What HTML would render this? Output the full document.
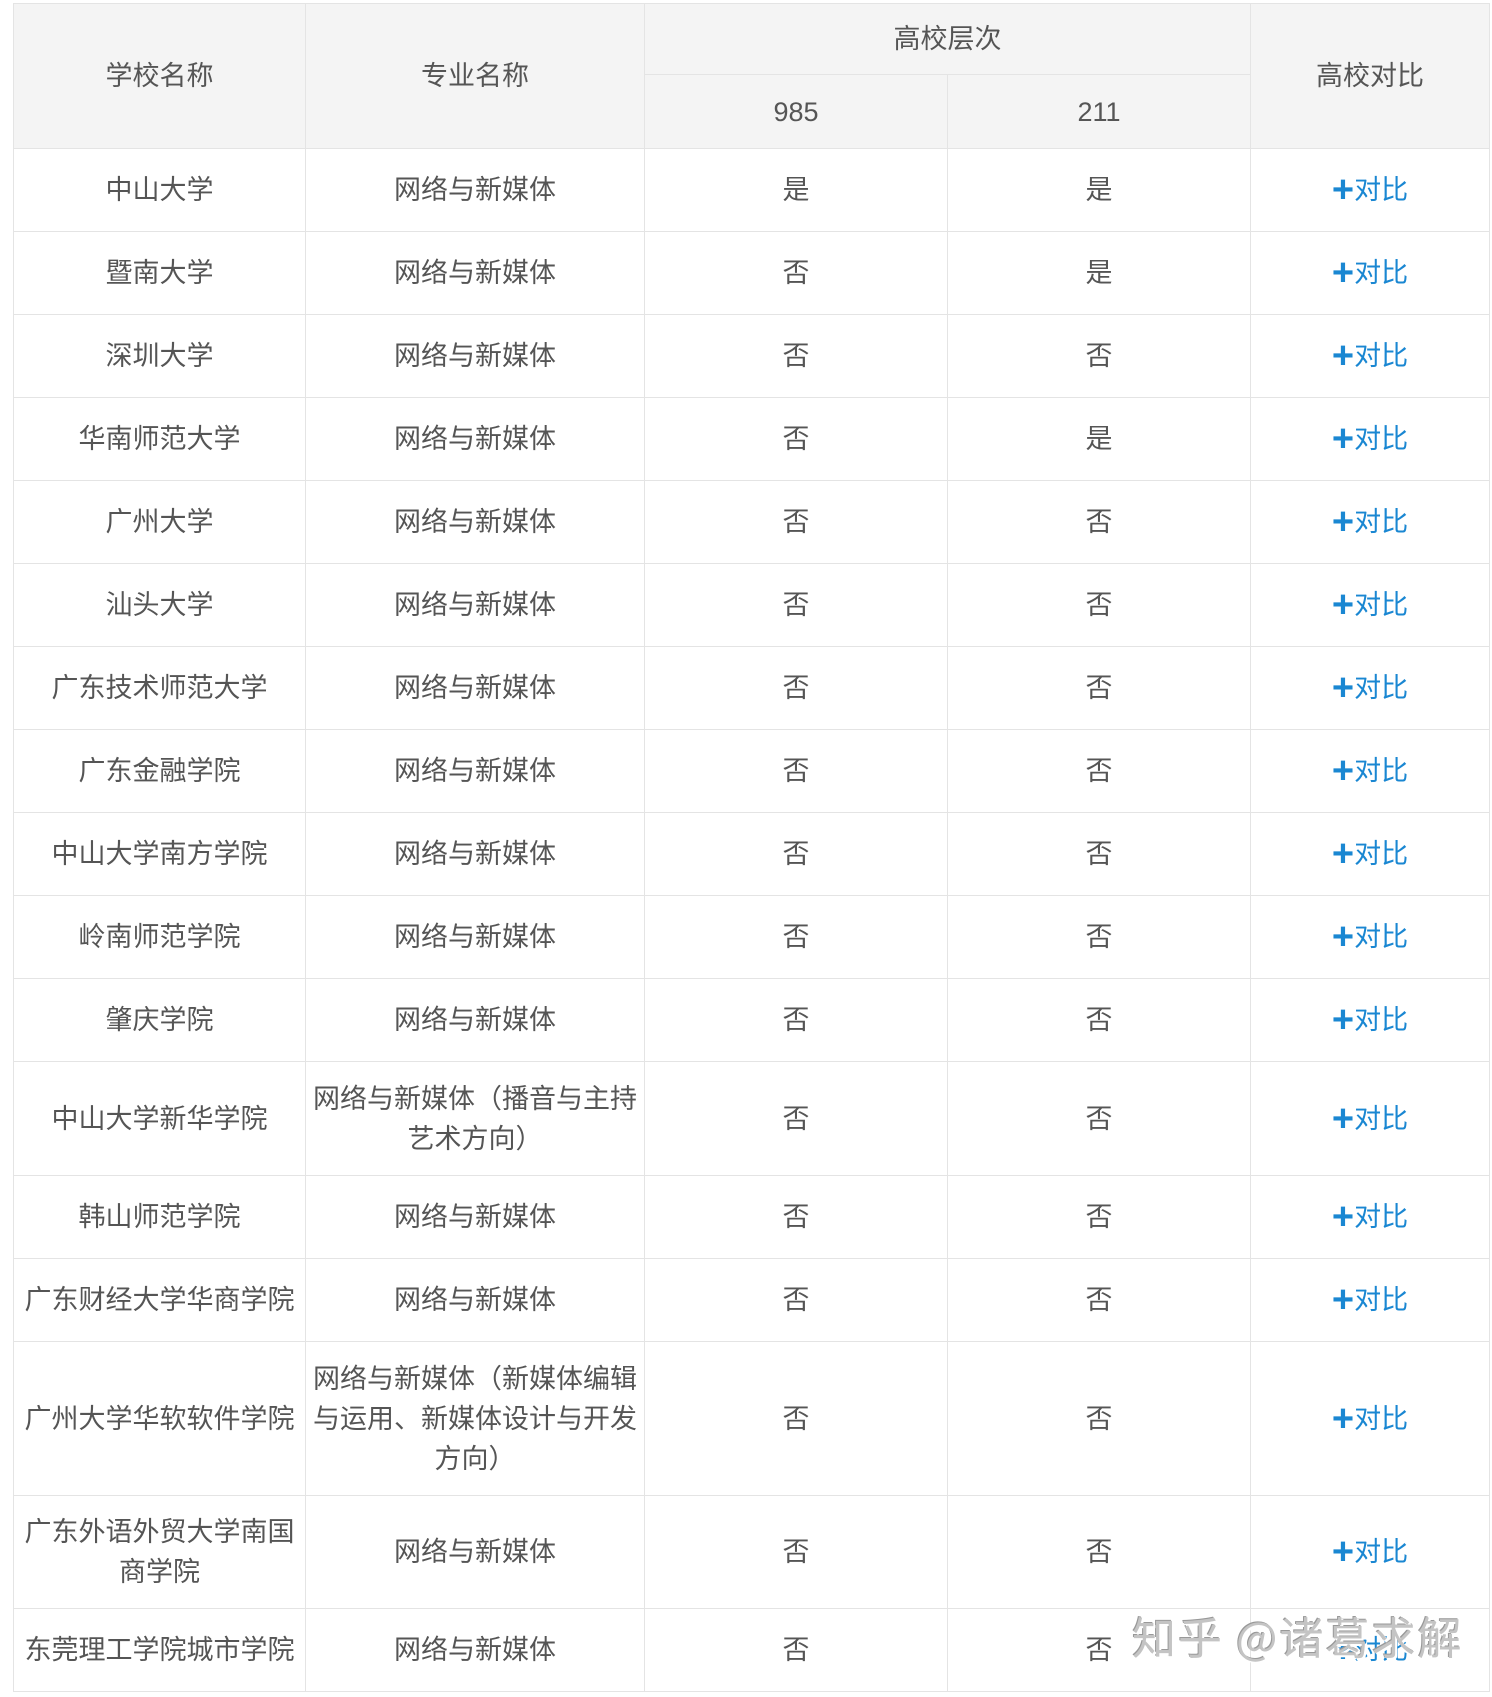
<!DOCTYPE html>
<html><head><meta charset="utf-8"><style>
body{margin:0;background:#fff;width:1492px;height:1697px;overflow:hidden;position:relative;font-family:"Liberation Sans","Noto Sans CJK SC",sans-serif;}
table{position:absolute;left:13px;top:3px;border-collapse:collapse;table-layout:fixed;width:1476px;}
td,th{border:1px solid #e4e4e4;text-align:center;vertical-align:middle;font-size:27px;color:#555;font-weight:normal;line-height:40px;padding:0 6px;}
th{background:#f4f4f4;}
.b{color:#1a87d2;}
.b b{font-size:38px;font-weight:bold;vertical-align:-3px;line-height:30px;}
tr.r{height:83px;}
.wm{position:absolute;left:1132px;top:1603px;font-size:44px;color:#c4c4c4;text-shadow:2px 2px 0 #fff,-1px -1px 0 #999;letter-spacing:2px;font-family:"Noto Sans CJK SC",sans-serif;}
</style></head><body>
<table>
<colgroup><col style="width:292px"><col style="width:339px"><col style="width:303px"><col style="width:303px"><col style="width:239px"></colgroup>
<tr style="height:71px"><th rowspan="2">学校名称</th><th rowspan="2">专业名称</th><th colspan="2">高校层次</th><th rowspan="2">高校对比</th></tr>
<tr style="height:74px"><th>985</th><th>211</th></tr>
<tr class="r"><td>中山大学</td><td>网络与新媒体</td><td>是</td><td>是</td><td class="b"><b>+</b>对比</td></tr>
<tr class="r"><td>暨南大学</td><td>网络与新媒体</td><td>否</td><td>是</td><td class="b"><b>+</b>对比</td></tr>
<tr class="r"><td>深圳大学</td><td>网络与新媒体</td><td>否</td><td>否</td><td class="b"><b>+</b>对比</td></tr>
<tr class="r"><td>华南师范大学</td><td>网络与新媒体</td><td>否</td><td>是</td><td class="b"><b>+</b>对比</td></tr>
<tr class="r"><td>广州大学</td><td>网络与新媒体</td><td>否</td><td>否</td><td class="b"><b>+</b>对比</td></tr>
<tr class="r"><td>汕头大学</td><td>网络与新媒体</td><td>否</td><td>否</td><td class="b"><b>+</b>对比</td></tr>
<tr class="r"><td>广东技术师范大学</td><td>网络与新媒体</td><td>否</td><td>否</td><td class="b"><b>+</b>对比</td></tr>
<tr class="r"><td>广东金融学院</td><td>网络与新媒体</td><td>否</td><td>否</td><td class="b"><b>+</b>对比</td></tr>
<tr class="r"><td>中山大学南方学院</td><td>网络与新媒体</td><td>否</td><td>否</td><td class="b"><b>+</b>对比</td></tr>
<tr class="r"><td>岭南师范学院</td><td>网络与新媒体</td><td>否</td><td>否</td><td class="b"><b>+</b>对比</td></tr>
<tr class="r"><td>肇庆学院</td><td>网络与新媒体</td><td>否</td><td>否</td><td class="b"><b>+</b>对比</td></tr>
<tr style="height:114px"><td>中山大学新华学院</td><td>网络与新媒体（播音与主持艺术方向）</td><td>否</td><td>否</td><td class="b"><b>+</b>对比</td></tr>
<tr class="r"><td>韩山师范学院</td><td>网络与新媒体</td><td>否</td><td>否</td><td class="b"><b>+</b>对比</td></tr>
<tr class="r"><td>广东财经大学华商学院</td><td>网络与新媒体</td><td>否</td><td>否</td><td class="b"><b>+</b>对比</td></tr>
<tr style="height:154px"><td>广州大学华软软件学院</td><td>网络与新媒体（新媒体编辑与运用、新媒体设计与开发方向）</td><td>否</td><td>否</td><td class="b"><b>+</b>对比</td></tr>
<tr style="height:113px"><td>广东外语外贸大学南国商学院</td><td>网络与新媒体</td><td>否</td><td>否</td><td class="b"><b>+</b>对比</td></tr>
<tr class="r"><td>东莞理工学院城市学院</td><td>网络与新媒体</td><td>否</td><td>否</td><td class="b"><b>+</b>对比</td></tr>
</table>
<div class="wm">知乎 @诸葛求解</div>
</body></html>
